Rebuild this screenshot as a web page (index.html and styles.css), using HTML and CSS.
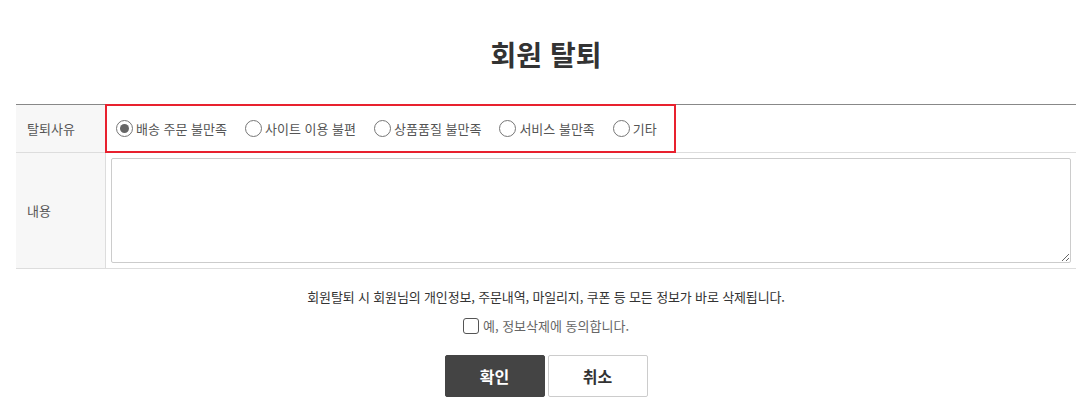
FILE: index.html
```html
<!DOCTYPE html>
<html lang="ko">
<head>
    <meta charset="UTF-8">
    <meta name="viewport" content="width=device-width, initial-scale=1.0">
    <title>회원 탈퇴</title>
    <link rel="stylesheet" href="styles.css">
</head>
<body>
    <div class="container">
        <h2 class="page-title">회원 탈퇴</h2>

        <div class="form-table">
            <div class="form-row">
                <div class="form-label">탈퇴사유</div>
                <div class="form-value reason-cell">
                    <span class="highlight"></span>
                    <label class="radio"><input type="radio" name="reason" checked>배송 주문 불만족</label>
                    <label class="radio"><input type="radio" name="reason">사이트 이용 불편</label>
                    <label class="radio"><input type="radio" name="reason">상품품질 불만족</label>
                    <label class="radio"><input type="radio" name="reason">서비스 불만족</label>
                    <label class="radio"><input type="radio" name="reason">기타</label>
                </div>
            </div>
            <div class="form-row">
                <div class="form-label">내용</div>
                <div class="form-value content-cell">
                    <textarea class="content-box"></textarea>
                </div>
            </div>
        </div>

        <p class="notice">회원탈퇴 시 회원님의 개인정보, 주문내역, 마일리지, 쿠폰 등 모든 정보가 바로 삭제됩니다.</p>
        <label class="agree"><input type="checkbox">예, 정보삭제에 동의합니다.</label>

        <div class="btn-group">
            <button class="btn btn-dark">확인</button>
            <button class="btn btn-light">취소</button>
        </div>
    </div>
</body>
</html>
```

FILE: styles.css
```css
* {
    box-sizing: border-box;
}

body {
    margin: 0;
    font-family: "Noto Sans CJK KR", "Noto Sans", sans-serif;
    color: #333;
    background: #fff;
}

.container {
    margin: 0 13px 0 16px;
}

.page-title {
    margin: 0;
    padding-top: 34px;
    margin-bottom: 30px;
    font-size: 28px;
    line-height: 40px;
    font-weight: 700;
    text-align: center;
    color: #333;
}

.form-table {
    border-top: 1px solid #888;
}

.form-row {
    display: grid;
    grid-template-columns: 90px 1fr;
    border-bottom: 1px solid #ddd;
}

.form-label {
    display: flex;
    align-items: center;
    padding-left: 11px;
    background: #f7f7f7;
    border-right: 1px solid #ddd;
    font-size: 13px;
    color: #555;
}

.reason-cell {
    position: relative;
    display: flex;
    align-items: center;
    height: 47px;
    padding-left: 10px;
}

.highlight {
    position: absolute;
    left: -1px;
    top: -1px;
    width: 571px;
    height: 49px;
    border: 2px solid #e8212e;
    pointer-events: none;
}

.radio {
    display: flex;
    align-items: center;
    margin-right: 18px;
    font-size: 13px;
    color: #555;
    cursor: pointer;
}

.radio input {
    appearance: none;
    -webkit-appearance: none;
    width: 17px;
    height: 17px;
    margin: 0 3px 0 0;
    border: 1px solid #767676;
    border-radius: 50%;
    background: #fff;
    display: grid;
    place-items: center;
}

.radio input:checked::before {
    content: "";
    width: 9px;
    height: 9px;
    border-radius: 50%;
    background: #666;
}

.content-cell {
    padding: 5px;
}

.content-box {
    display: block;
    width: 100%;
    height: 105px;
    border: 1px solid #ccc;
    border-radius: 2px;
    resize: vertical;
    font-family: inherit;
}

.notice {
    margin: 18px 0 0;
    font-size: 13px;
    line-height: 20px;
    letter-spacing: -0.15px;
    text-align: center;
    color: #333;
}

.agree {
    display: flex;
    justify-content: center;
    align-items: center;
    margin-top: 9px;
    font-size: 13px;
    line-height: 20px;
    color: #666;
}

.agree input {
    appearance: none;
    -webkit-appearance: none;
    width: 16px;
    height: 16px;
    margin: 0 4px 0 0;
    border: 1px solid #555;
    border-radius: 3px;
    background: #fff;
}

.btn-group {
    display: flex;
    justify-content: center;
    gap: 3px;
    margin-top: 19px;
}

.btn {
    width: 100px;
    height: 42px;
    border-radius: 2px;
    font-family: inherit;
    font-size: 16px;
    font-weight: 700;
    cursor: pointer;
}

.btn-dark {
    background: #444;
    border: 1px solid #444;
    color: #fff;
}

.btn-light {
    background: #fff;
    border: 1px solid #ccc;
    color: #333;
}
```
